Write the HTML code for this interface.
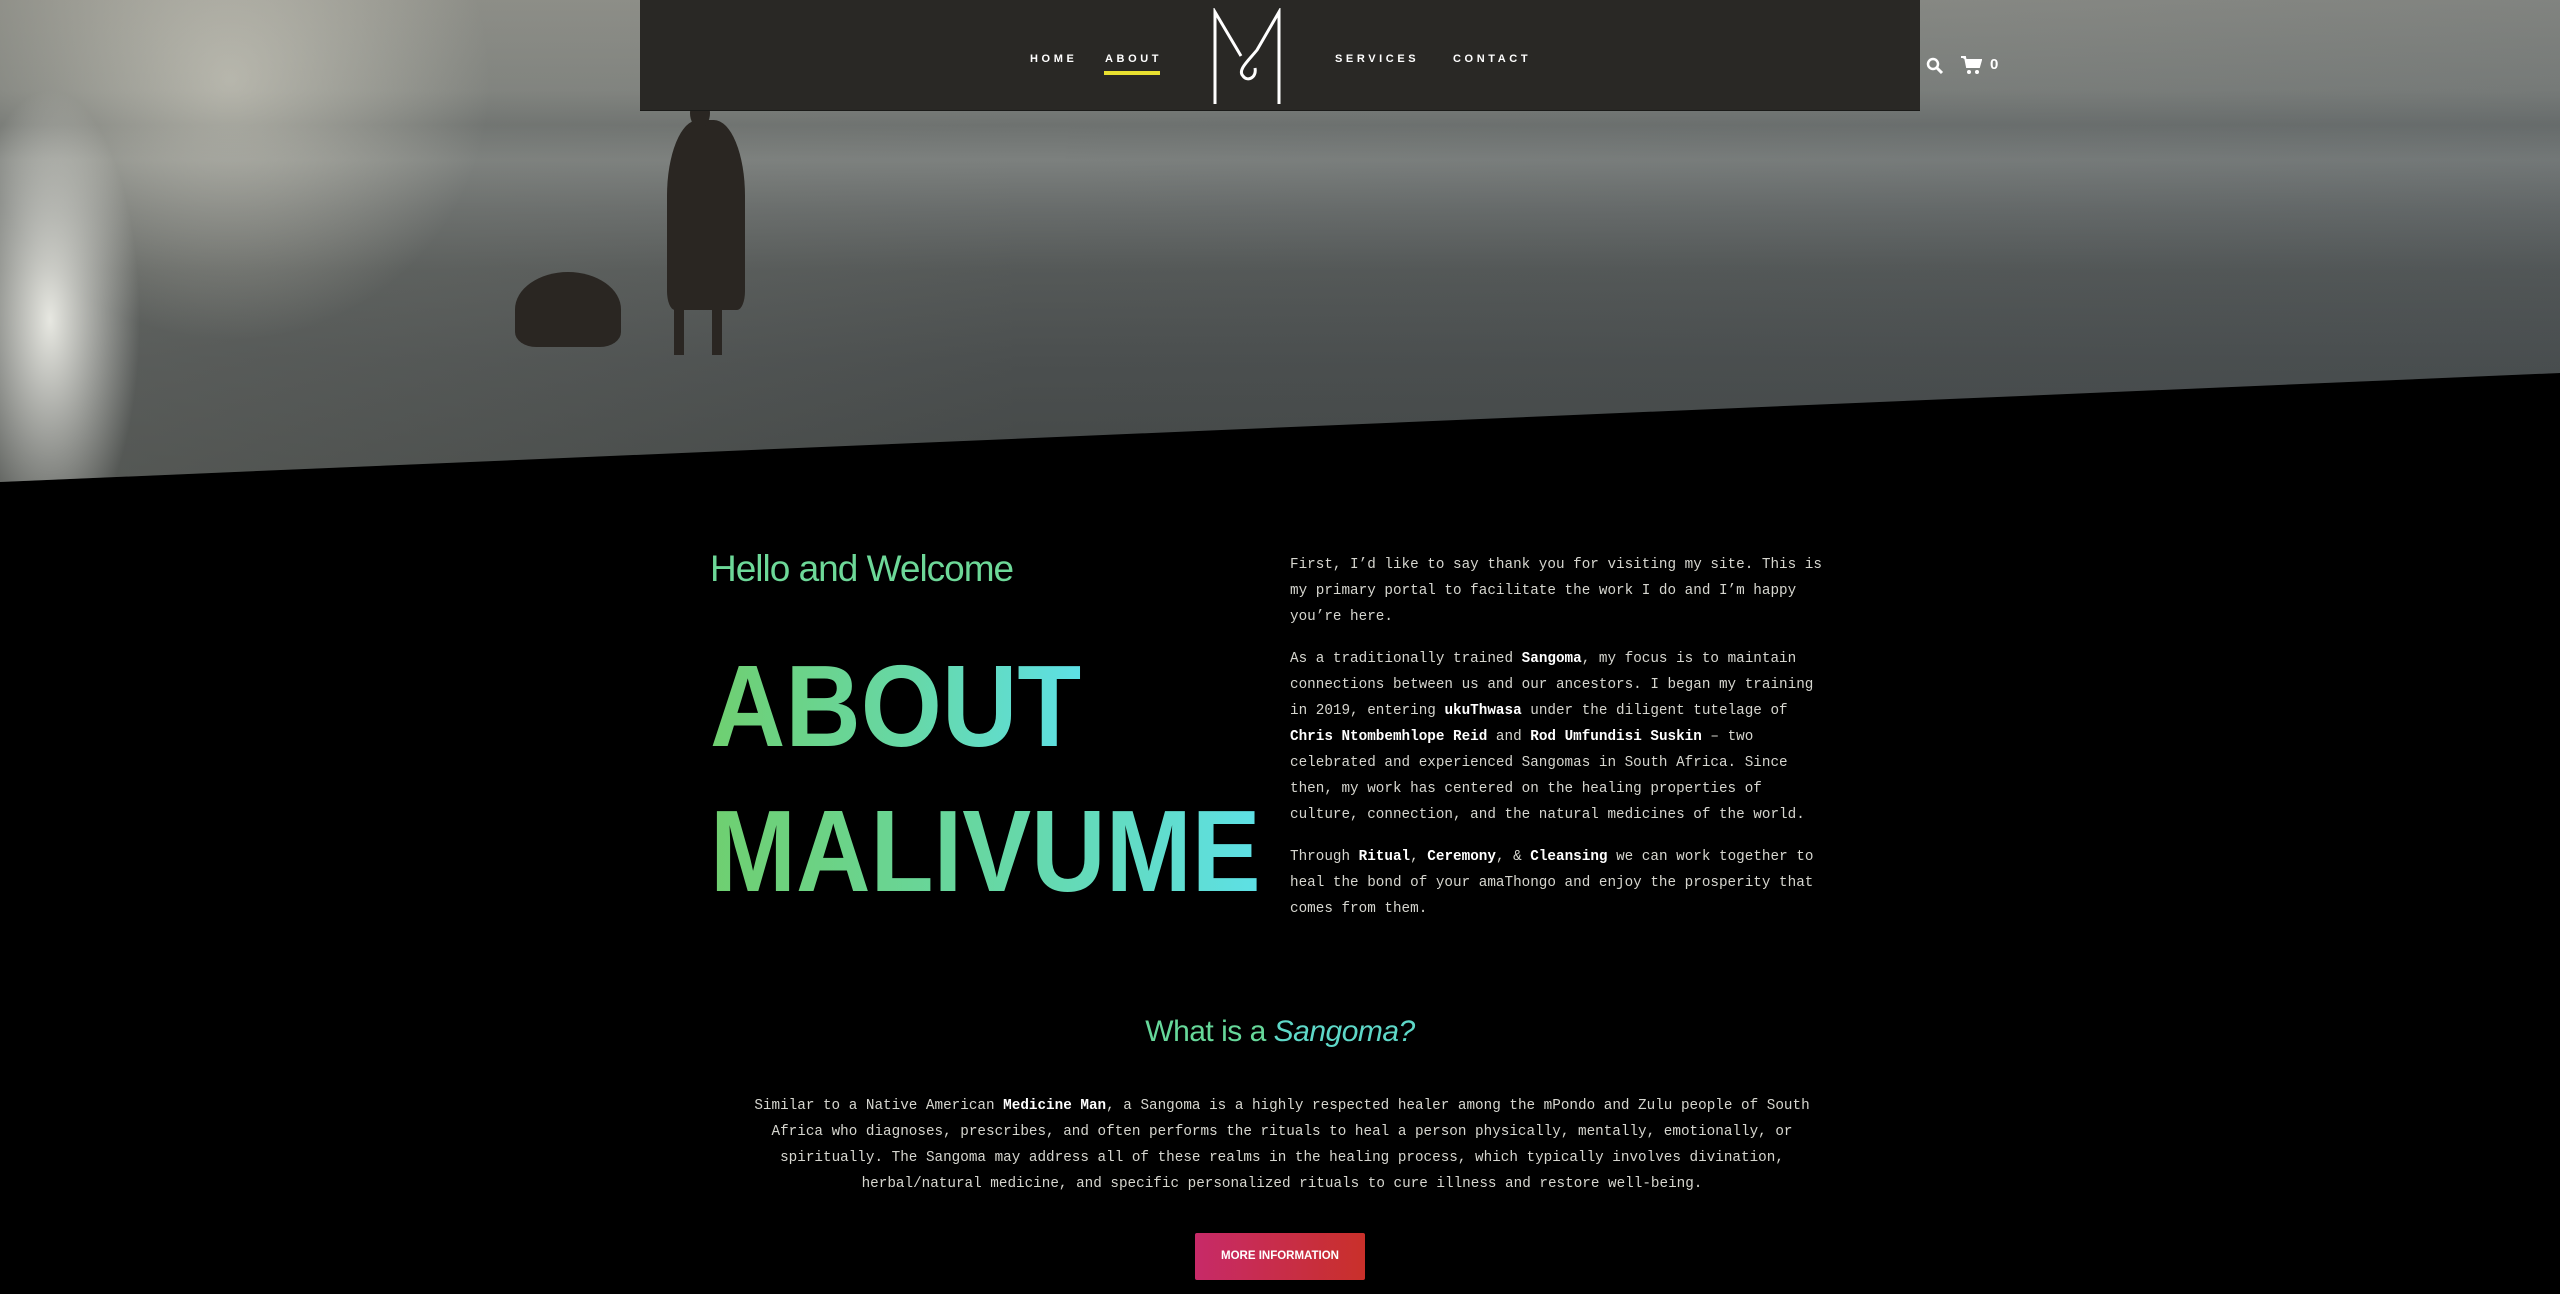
<!DOCTYPE html>
<html><head><meta charset="utf-8"><style>
*{margin:0;padding:0;box-sizing:border-box}
html,body{width:2560px;height:1294px;overflow:hidden;background:#000}
body{position:relative;font-family:"Liberation Mono",monospace;color:#d6d6cf}
.hero{position:absolute;left:0;top:0;width:2560px;height:490px;clip-path:polygon(0 0,2560px 0,2560px 373px,0 482px);
background:
radial-gradient(ellipse 90px 230px at 50px 320px,rgba(255,255,248,.85),rgba(255,255,248,0) 100%),
radial-gradient(ellipse 260px 260px at 230px 80px,rgba(225,222,208,.55),rgba(225,222,208,0) 100%),
linear-gradient(90deg,rgba(140,140,130,.25),rgba(0,0,0,0) 40%,rgba(60,70,80,.15) 100%),
linear-gradient(180deg,#8d8e88 0px,#80837f 90px,#6e7270 125px,#7c807e 160px,#686c6b 210px,#555958 270px,#4b4f4f 360px,#444847 480px);}
.person{position:absolute;background:#2a2622;border-radius:40% 40% 10% 10%}
.nav{position:absolute;left:640px;top:0;width:1280px;height:111px;background:#292825;border-bottom:1px solid #1a1a18}
.nl{position:absolute;top:53px;font-family:"Liberation Sans",sans-serif;font-size:11px;font-weight:bold;letter-spacing:3.6px;color:#fff}
.ul{position:absolute;left:1104px;top:71px;width:56px;height:4px;background:#e8e030}
h2.hw{position:absolute;left:710px;top:548px;font-family:"Liberation Sans",sans-serif;font-weight:300;font-size:37px;color:#6dd898;letter-spacing:-1px}
.big{position:absolute;left:710px;font-family:"Liberation Sans",sans-serif;font-size:116px;line-height:1;font-weight:bold;background:linear-gradient(90deg,#6fcf70 0%,#66d8a8 55%,#5de0e6 100%);-webkit-background-clip:text;background-clip:text;color:transparent;white-space:nowrap;display:inline-block;transform-origin:left}
.col{position:absolute;left:1290px;top:552px;width:542px;font-size:14.3px;line-height:26px}
.col p{margin-bottom:16px}
b{color:#fff;font-weight:bold}
h3{position:absolute;left:0;width:2560px;top:1015px;text-align:center;font-family:"Liberation Sans",sans-serif;font-weight:300;font-size:30px;color:#66d89a;letter-spacing:-0.5px}
h3 i{color:#5ed8c8}
.center{position:absolute;left:746px;width:1072px;top:1093px;text-align:center;font-size:14.3px;line-height:26px}
.btn{position:absolute;left:1195px;top:1233px;width:170px;height:47px;background:linear-gradient(90deg,#c72a68,#c9302a);border-radius:2px;color:#fff;font-family:"Liberation Sans",sans-serif;font-weight:bold;font-size:11.5px;text-align:center;line-height:47px}
</style></head><body>
<div class="hero">
<div class="person" style="left:667px;top:120px;width:78px;height:190px"></div>
<div class="person" style="left:690px;top:98px;width:20px;height:30px;border-radius:50%"></div>
<div class="person" style="left:674px;top:300px;width:10px;height:55px;border-radius:0"></div>
<div class="person" style="left:712px;top:300px;width:10px;height:55px;border-radius:0"></div>
<div class="person" style="left:515px;top:272px;width:106px;height:75px;border-radius:50% 50% 20% 20%"></div>
</div>
<div class="nav"></div>
<span class="nl" style="left:1030px">HOME</span>
<span class="nl" style="left:1105px">ABOUT</span>
<span class="nl" style="left:1335px">SERVICES</span>
<span class="nl" style="left:1453px">CONTACT</span>
<div class="ul"></div>
<svg style="position:absolute;left:1207px;top:8px" width="80" height="98" viewBox="0 0 80 98"><path d="M8 96 V4 L34 48 M72 96 V4 L50 42 C42 52 30 62 36 68 C40 74 50 70 48 60" fill="none" stroke="#fff" stroke-width="3"/></svg>
<svg style="position:absolute;left:1926px;top:57px" width="18" height="18" viewBox="0 0 18 18"><circle cx="7" cy="7" r="5" fill="none" stroke="#fff" stroke-width="2.5"/><path d="M11 11 L16 16" stroke="#fff" stroke-width="3"/></svg>
<svg style="position:absolute;left:1960px;top:55px" width="22" height="20" viewBox="0 0 22 20"><path d="M1 2 H5 L7 12 H19 L21 5 H6" fill="#fff" stroke="#fff" stroke-width="2"/><circle cx="9" cy="17" r="2" fill="#fff"/><circle cx="17" cy="17" r="2" fill="#fff"/></svg>
<span style="position:absolute;left:1990px;top:56px;color:#fff;font-family:'Liberation Sans',sans-serif;font-weight:bold;font-size:15px">0</span>
<h2 class="hw">Hello and Welcome</h2>
<div class="big" style="top:648px;transform:scaleX(.9)">ABOUT</div>
<div class="big" style="top:793px;transform:scaleX(.89)">MALIVUME</div>
<div class="col">
<p>First, I’d like to say thank you for visiting my site. This is my primary portal to facilitate the work I do and I’m happy you’re here.</p>
<p>As a traditionally trained <b>Sangoma</b>, my focus is to maintain connections between us and our ancestors. I began my training in 2019, entering <b>ukuThwasa</b> under the diligent tutelage of <b>Chris Ntombemhlope Reid</b> and <b>Rod Umfundisi Suskin</b> – two celebrated and experienced Sangomas in South Africa. Since then, my work has centered on the healing properties of culture, connection, and the natural medicines of the world.</p>
<p>Through <b>Ritual</b>, <b>Ceremony</b>, &amp; <b>Cleansing</b> we can work together to heal the bond of your amaThongo and enjoy the prosperity that comes from them.</p>
</div>
<h3>What is a <i>Sangoma?</i></h3>
<div class="center">Similar to a Native American <b>Medicine Man</b>, a Sangoma is a highly respected healer among the mPondo and Zulu people of South Africa who diagnoses, prescribes, and often performs the rituals to heal a person physically, mentally, emotionally, or spiritually. The Sangoma may address all of these realms in the healing process, which typically involves divination, herbal/natural medicine, and specific personalized rituals to cure illness and restore well-being.</div>
<div class="btn">MORE INFORMATION</div>
</body></html>
